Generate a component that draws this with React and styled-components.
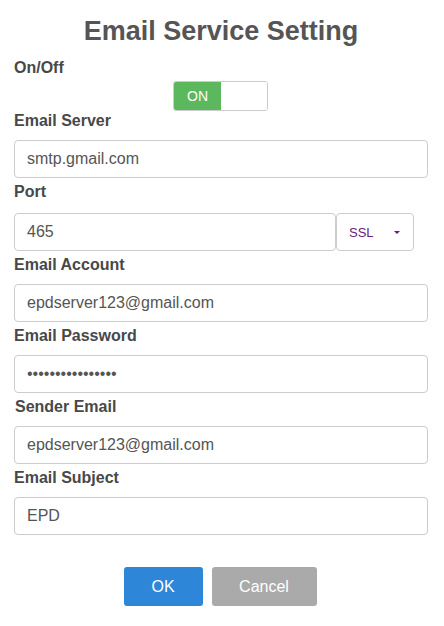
import * as React from "react"
import styled, { createGlobalStyle } from "styled-components"

const GlobalStyle = createGlobalStyle`
  body {
    margin: 0;
    background: #fff;
    font-family: "Liberation Sans", Arial, sans-serif;
  }
`

const fields = [
  { label: "Email Server", value: "smtp.gmail.com" },
  { label: "Port", value: "465", select: "SSL", gap: 11 },
  { label: "Email Account", value: "epdserver123@gmail.com" },
  { label: "Email Password", value: "••••••••••••••••", password: true },
  { label: "Sender Email", value: "epdserver123@gmail.com", indent: 1 },
  { label: "Email Subject", value: "EPD" },
]

// email settings dialog
const App = () => {
  return (
    <>
      <GlobalStyle />
      <Page>
        <Title>Email Service Setting</Title>
        <Label gap={4}>On/Off</Label>
        <ToggleRow>
          <Toggle>
            <ToggleOn>ON</ToggleOn>
            <ToggleOff />
          </Toggle>
        </ToggleRow>
        {fields.map((f, i) => (
          <Field key={i}>
            <Label gap={f.gap || 9} indent={f.indent}>{f.label}</Label>
            <InputRow>
              <Input>{f.value}</Input>
              {f.select && (
                <Select>
                  <span>{f.select}</span>
                  <Caret />
                </Select>
              )}
            </InputRow>
          </Field>
        ))}
        <Buttons>
          <Button primary>OK</Button>
          <Button>Cancel</Button>
        </Buttons>
      </Page>
    </>
  )
}

export default App

const Page = styled.div`
  padding: 0 16px 0 14px;
  color: #555;
`

const Title = styled.h1`
  margin: 0;
  padding-top: 15px;
  height: 58px;
  box-sizing: border-box;
  text-align: center;
  font-size: 27px;
  font-weight: bold;
  line-height: 32px;
  color: #555;
`

const Label = styled.div`
  font-size: 16px;
  font-weight: bold;
  line-height: 20px;
  color: #484848;
  margin-bottom: ${p => p.gap}px;
  padding-left: ${p => p.indent || 0}px;
`

const ToggleRow = styled.div`
  display: flex;
  padding-left: 159px;
  margin-top: -1px;
`

const Toggle = styled.div`
  display: flex;
  width: 95px;
  height: 30px;
  box-sizing: border-box;
  border: 1px solid #ccc;
  border-radius: 3px;
  overflow: hidden;
`

const ToggleOn = styled.div`
  width: 47px;
  background: #5cb85c;
  color: #fff;
  font-size: 14px;
  display: flex;
  align-items: center;
  justify-content: center;
`

const ToggleOff = styled.div`
  flex: 1;
  background: #fff;
`

const Field = styled.div`
  display: flex;
  flex-direction: column;
`

const InputRow = styled.div`
  display: flex;
  margin-bottom: 4px;
`

const Input = styled.div`
  flex: 1;
  height: 38px;
  box-sizing: border-box;
  border: 1px solid #ccc;
  border-radius: 4px;
  padding: 0 12px;
  display: flex;
  align-items: center;
  font-size: 16px;
  color: #555;
`

const Select = styled.div`
  width: 78px;
  height: 38px;
  box-sizing: border-box;
  border: 1px solid #ccc;
  border-radius: 4px;
  margin-right: 14px;
  padding: 0 12px;
  display: flex;
  align-items: center;
  justify-content: space-between;
  font-size: 13px;
  color: #6a1b7a;
`

const Caret = styled.span`
  width: 0;
  height: 0;
  margin-right: 1px;
  border-left: 3px solid transparent;
  border-right: 3px solid transparent;
  border-top: 3px solid #6a1b7a;
`

const Buttons = styled.div`
  display: flex;
  justify-content: center;
  gap: 9px;
  margin-top: 28px;
  padding-right: 2px;
`

const Button = styled.div`
  width: ${p => (p.primary ? "79px" : "105px")};
  height: 39px;
  border-radius: 3px;
  background: ${p => (p.primary ? "#2d86d8" : "#aaaaaa")};
  color: #fff;
  font-size: 16px;
  display: flex;
  align-items: center;
  justify-content: center;
`
